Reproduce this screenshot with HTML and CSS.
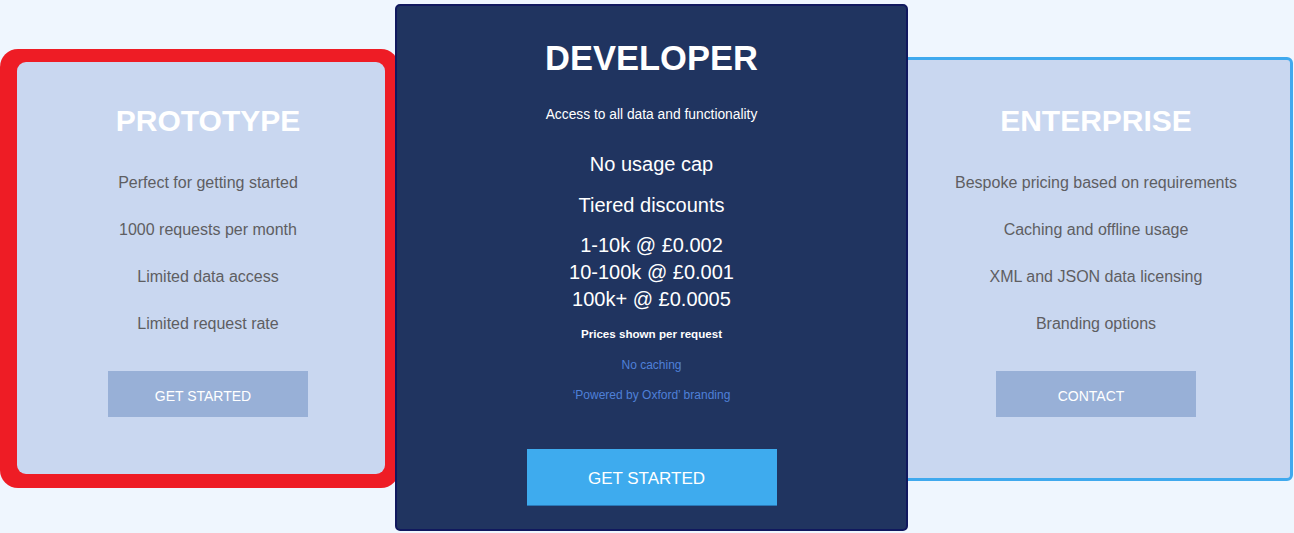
FILE: index.html
```html
<!DOCTYPE html>
<html lang="en">
<head>
<meta charset="utf-8">
<title>Pricing</title>
<link rel="stylesheet" href="styles.css">
</head>
<body>
<div class="plans">
  <div class="highlight">
    <div class="plan plan-proto">
      <h2 class="plan-title">PROTOTYPE</h2>
      <ul class="features">
        <li>Perfect for getting started</li>
        <li>1000 requests per month</li>
        <li>Limited data access</li>
        <li>Limited request rate</li>
      </ul>
      <a class="btn-soft">GET STARTED</a>
    </div>
  </div>

  <div class="plan-dev">
    <h2 class="dev-title">DEVELOPER</h2>
    <p class="dev-sub">Access to all data and functionality</p>
    <p class="dev-big">No usage cap</p>
    <p class="dev-big dev-tiered">Tiered discounts</p>
    <div class="dev-prices">
      <div>1-10k @ £0.002</div>
      <div>10-100k @ £0.001</div>
      <div>100k+ @ £0.0005</div>
    </div>
    <p class="dev-note">Prices shown per request</p>
    <p class="dev-muted">No caching</p>
    <p class="dev-muted">‘Powered by Oxford’ branding</p>
    <a class="btn-main">GET STARTED</a>
  </div>

  <div class="plan plan-ent">
    <h2 class="plan-title">ENTERPRISE</h2>
    <ul class="features">
      <li>Bespoke pricing based on requirements</li>
      <li>Caching and offline usage</li>
      <li>XML and JSON data licensing</li>
      <li>Branding options</li>
    </ul>
    <a class="btn-soft">CONTACT</a>
  </div>
</div>
</body>
</html>
```

FILE: styles.css
```css
html, body {
  margin: 0;
  padding: 0;
}
body {
  background: #eff6fe;
  font-family: "Liberation Sans", Arial, sans-serif;
  width: 1294px;
  height: 533px;
  overflow: hidden;
}
.plans {
  display: flex;
  align-items: flex-start;
}

/* red highlight around the first plan */
.highlight {
  box-sizing: border-box;
  width: 399px;
  height: 439px;
  margin-top: 49px;
  padding: 13px 14px 14px 17px;
  background: #ee1c25;
  border-radius: 18px;
  display: flex;
}

.plan {
  box-sizing: border-box;
  background: #c9d7f0;
  display: flex;
  flex-direction: column;
  align-items: center;
  text-align: center;
}
.plan-proto {
  flex: 1;
  border-radius: 9px;
  padding-top: 41px;
  padding-left: 14px;
}
.plan-ent {
  width: 394px;
  height: 424px;
  margin-top: 57px;
  margin-left: -9px;
  border: 3px solid #3fa9ee;
  border-radius: 6px;
  padding-top: 43px;
}

.plan-title {
  margin: 0;
  font-size: 30px;
  line-height: 36px;
  font-weight: bold;
  color: #ffffff;
}
.features {
  list-style: none;
  margin: 34px 0 0;
  padding: 0;
}
.features li {
  font-size: 16px;
  line-height: 20px;
  color: #5e5e62;
  margin-bottom: 27px;
}
.features li:last-child {
  margin-bottom: 0;
}
.btn-soft {
  box-sizing: border-box;
  display: flex;
  align-items: center;
  justify-content: center;
  width: 200px;
  height: 46px;
  margin-top: 37px;
  padding: 3px 10px 0 0;
  background: #98b0d7;
  color: #ffffff;
  font-size: 14px;
  cursor: pointer;
}

/* developer plan */
.plan-dev {
  position: relative;
  z-index: 1;
  box-sizing: border-box;
  width: 513px;
  height: 527px;
  margin-top: 4px;
  margin-left: -4px;
  background: #203460;
  border: 2px solid #10185e;
  border-radius: 5px;
  display: flex;
  flex-direction: column;
  align-items: center;
  text-align: center;
  color: #ffffff;
  padding-top: 31px;
}
.dev-title {
  margin: 0;
  font-size: 34.5px;
  line-height: 42px;
  font-weight: bold;
}
.dev-sub {
  margin: 27px 0 0;
  font-size: 13.8px;
  line-height: 18px;
}
.dev-big {
  margin: 28px 0 0;
  font-size: 20px;
  line-height: 24px;
}
.dev-tiered {
  margin-top: 17px;
}
.dev-prices {
  margin-top: 15px;
  font-size: 20px;
  line-height: 27px;
}
.dev-note {
  margin: 13px 0 0;
  font-size: 11.6px;
  line-height: 16px;
  font-weight: bold;
}
.dev-muted {
  margin: 15px 0 0;
  font-size: 12px;
  line-height: 16px;
  color: #4f80d8;
}
.dev-muted + .dev-muted {
  margin-top: 14px;
}
.btn-main {
  box-sizing: border-box;
  display: flex;
  align-items: center;
  justify-content: center;
  width: 250px;
  height: 57px;
  margin-top: 46px;
  padding: 4px 10px 0 0;
  background: #3eabee;
  border-bottom: 1px solid #2a78b8;
  color: #ffffff;
  font-size: 17px;
  cursor: pointer;
}
```
